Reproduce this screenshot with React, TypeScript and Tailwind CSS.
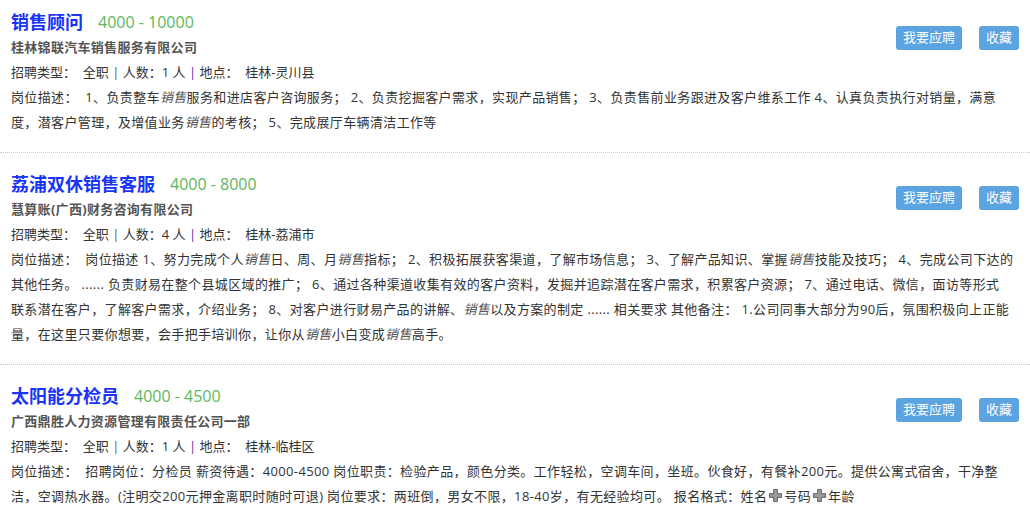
import { Fragment, type ReactNode } from 'react';

interface Job {
    title: string;
    salary: string;
    company: string;
    count: number;
    place: string;
    desc: ReactNode;
}

const Em = ({ children }: { children: ReactNode }) => (
    <em className="italic text-[#555]">{children}</em>
);

const Plus = () => (
    <svg width="15" height="15" viewBox="0 0 16 16" className="inline-block align-[-2px] mx-[1px]">
        <path
            d="M6 1.5h4v4.5h4.5v4h-4.5v4.5h-4v-4.5h-4.5v-4h4.5z"
            fill="#9b9b9b"
            stroke="#5c5c5c"
            strokeWidth="1"
        />
    </svg>
);

const jobs: Job[] = [
    {
        title: '销售顾问',
        salary: '4000 - 10000',
        company: '桂林锦联汽车销售服务有限公司',
        count: 1,
        place: '桂林-灵川县',
        desc: (
            <>
                1、负责整车<Em>销售</Em>服务和进店客户咨询服务； 2、负责挖掘客户需求，实现产品销售； 3、负责售前业务跟进及客户维系工作 4、认真负责执行对销量，满意度，潜客户管理，及增值业务<Em>销售</Em>的考核； 5、完成展厅车辆清洁工作等
            </>
        ),
    },
    {
        title: '荔浦双休销售客服',
        salary: '4000 - 8000',
        company: '慧算账(广西)财务咨询有限公司',
        count: 4,
        place: '桂林-荔浦市',
        desc: (
            <>
                岗位描述 1、努力完成个人<Em>销售</Em>日、周、月<Em>销售</Em>指标； 2、积极拓展获客渠道，了解市场信息； 3、了解产品知识、掌握<Em>销售</Em>技能及技巧； 4、完成公司下达的其他任务。 ...... 负责财易在整个县城区域的推广； 6、通过各种渠道收集有效的客户资料，发掘并追踪潜在客户需求，积累客户资源； 7、通过电话、微信，面访等形式
                <br />
                联系潜在客户，了解客户需求，介绍业务； 8、对客户进行财易产品的讲解、<Em>销售</Em>以及方案的制定 ...... 相关要求 其他备注： 1.公司同事大部分为90后，氛围积极向上正能量，在这里只要你想要，会手把手培训你，让你从<Em>销售</Em>小白变成<Em>销售</Em>高手。
            </>
        ),
    },
    {
        title: '太阳能分检员',
        salary: '4000 - 4500',
        company: '广西鼎胜人力资源管理有限责任公司一部',
        count: 1,
        place: '桂林-临桂区',
        desc: (
            <>
                招聘岗位：分检员 薪资待遇：4000-4500 岗位职责：检验产品，颜色分类。工作轻松，空调车间，坐班。伙食好，有餐补200元。提供公寓式宿舍，干净整洁，空调热水器。(注明交200元押金离职时随时可退) 岗位要求：两班倒，男女不限，18-40岁，有无经验均可。 报名格式：姓名<Plus />号码<Plus />年龄
            </>
        ),
    },
];

function JobItem({ job, first }: { job: Job; first: boolean }) {
    return (
        <div
            className={`px-[11px] pb-[17px] border-b border-dotted border-[#c8c8c8] ${first ? 'pt-[9px]' : 'pt-[18px]'}`}
        >
            <div className="flex justify-between items-start">
                <div>
                    <div className="flex items-center h-[26px] gap-[15px]">
                        <span className="text-[18px] font-bold text-[#1834f8] leading-[26px]">{job.title}</span>
                        <span className="text-[16px] text-[#5cb85c] leading-[26px]">{job.salary}</span>
                    </div>
                    <div className="text-[13px] leading-[25px] font-bold text-[#555] tracking-[0.3px]">{job.company}</div>
                    <div className="text-[13px] leading-[25px] text-[#333]">
                        招聘类型：&nbsp; 全职 <span className="text-[#555]">|</span> 人数：{job.count} 人{' '}
                        <span className="text-[#6b2f8f]">|</span> 地点：&nbsp; {job.place}
                    </div>
                </div>
                <div className={`flex gap-[17px] ${first ? 'mt-[17px]' : 'mt-[15px]'}`}>
                    <button className="h-[24px] px-[7px] rounded-[3px] bg-[#5ba3e1] text-white text-[13px]">
                        我要应聘
                    </button>
                    <button className="h-[24px] px-[7px] rounded-[3px] bg-[#5ba3e1] text-white text-[13px]">
                        收藏
                    </button>
                </div>
            </div>
            <div className="text-[13px] leading-[25px] text-[#333] tracking-[0.36px]">
                岗位描述：&nbsp; {job.desc}
            </div>
        </div>
    );
}

export default function App() {
    return (
        <div
            className="w-[1030px] h-[512px] overflow-hidden bg-white"
            style={{ fontFamily: '"Open Sans", "Noto Sans CJK SC", sans-serif' }}
        >
            {jobs.map((job, i) => (
                <Fragment key={i}>
                    <JobItem job={job} first={i === 0} />
                </Fragment>
            ))}
        </div>
    );
}
